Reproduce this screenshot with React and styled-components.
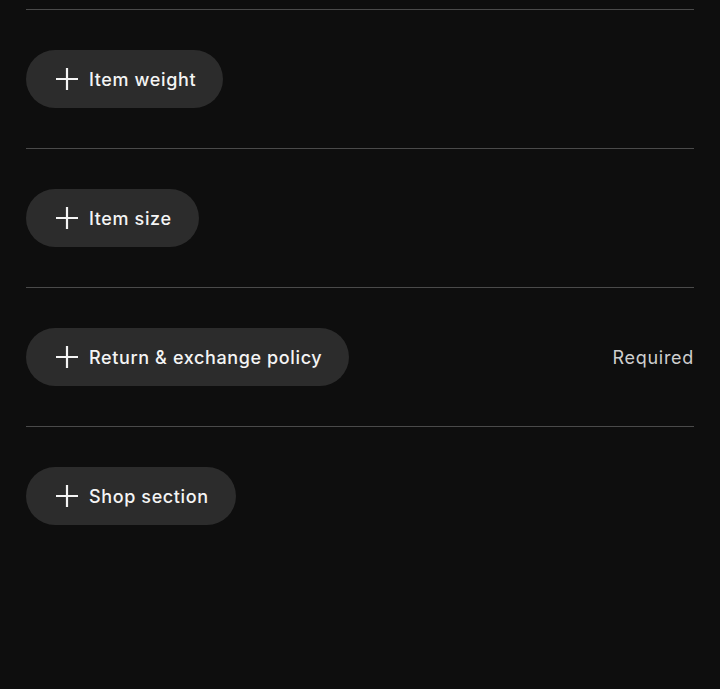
import React from "react";
import styled, { createGlobalStyle } from "styled-components";

const Global = createGlobalStyle`
  html, body { margin: 0; padding: 0; background: #0e0e0e; }
  body { font-family: Inter, "Noto Sans", "Liberation Sans", sans-serif; -webkit-font-smoothing: antialiased; }
`;

const Page = styled.div`
  background: #0e0e0e;
  min-height: 689px;
  padding: 9px 26px 0;
  box-sizing: border-box;
`;

const Section = styled.div`
  border-top: 1px solid #4a4a4a;
  padding: 40px 0;
  display: flex;
  align-items: center;
  justify-content: space-between;
`;

const AddButton = styled.button`
  display: inline-flex;
  align-items: center;
  gap: 11px;
  height: 58px;
  padding: 0 27px 0 30px;
  border: none;
  border-radius: 29px;
  background: #2c2c2c;
  color: #f4f4f4;
  font-family: inherit;
  font-size: 18px;
  font-weight: 500;
  letter-spacing: 0.62px;
  cursor: pointer;
`;

const Note = styled.span`
  color: #cfcfcf;
  font-size: 18px;
  font-weight: 400;
  letter-spacing: 0.7px;
`;

const Plus = () => (
  <svg width="22" height="22" viewBox="0 0 22 22" fill="none">
    <path d="M11 0v22M0 11h22" stroke="#f4f4f4" strokeWidth="2.2" />
  </svg>
);

const items = [
  { label: "Item weight" },
  { label: "Item size" },
  { label: "Return & exchange policy", note: "Required" },
  { label: "Shop section" },
];

export default function App() {
  return (
    <>
      <Global />
      <Page>
        {items.map((it) => (
          <Section key={it.label}>
            <AddButton>
              <Plus />
              {it.label}
            </AddButton>
            {it.note && <Note>{it.note}</Note>}
          </Section>
        ))}
      </Page>
    </>
  );
}
